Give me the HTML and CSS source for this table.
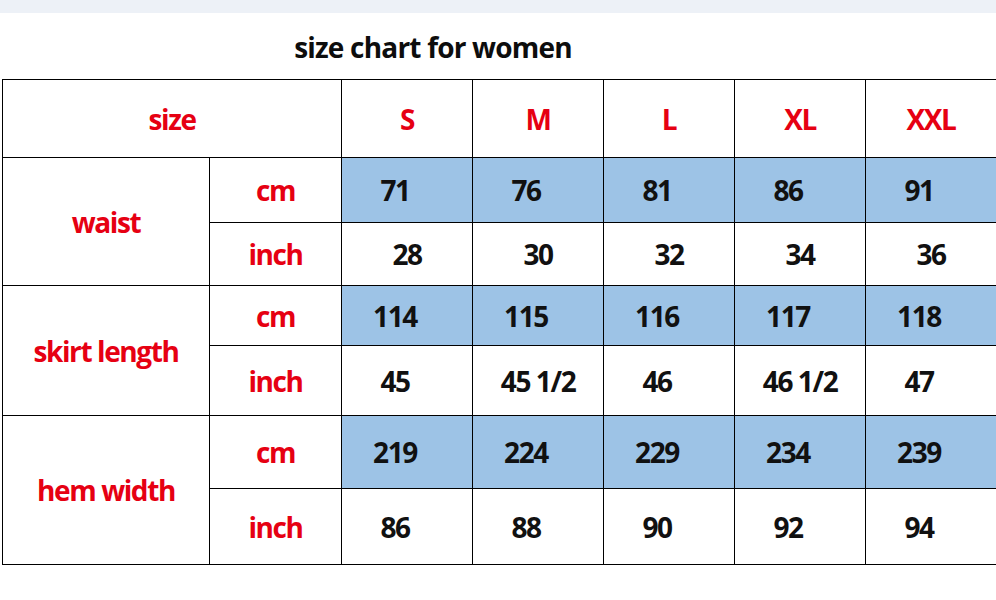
FILE: index.html
```html
<!DOCTYPE html>
<html>
<head>
<meta charset="utf-8">
<link rel="stylesheet" href="styles.css">
</head>
<body>
<div class="strip"></div>
<div class="title-wrap"><h1 class="title">size chart for women</h1></div>
<table class="chart">
  <colgroup>
    <col class="c-label"><col class="c-unit">
    <col class="c-size"><col class="c-size"><col class="c-size"><col class="c-size"><col class="c-size">
  </colgroup>
  <tr class="r-head">
    <td colspan="2" class="red">size</td>
    <td class="red">S</td><td class="red">M</td><td class="red">L</td><td class="red">XL</td><td class="red">XXL</td>
  </tr>
  <tr class="r1">
    <td rowspan="2" class="red">waist</td>
    <td class="red">cm</td>
    <td class="blue off">71</td><td class="blue off">76</td><td class="blue off">81</td><td class="blue off">86</td><td class="blue off">91</td>
  </tr>
  <tr class="r2">
    <td class="red">inch</td>
    <td>28</td><td>30</td><td>32</td><td>34</td><td>36</td>
  </tr>
  <tr class="r3">
    <td rowspan="2" class="red">skirt length</td>
    <td class="red">cm</td>
    <td class="blue off">114</td><td class="blue off">115</td><td class="blue off">116</td><td class="blue off">117</td><td class="blue off">118</td>
  </tr>
  <tr class="r4">
    <td class="red">inch</td>
    <td class="off">45</td><td>45 1/2</td><td class="off">46</td><td>46 1/2</td><td class="off">47</td>
  </tr>
  <tr class="r5">
    <td rowspan="2" class="red">hem width</td>
    <td class="red">cm</td>
    <td class="blue off">219</td><td class="blue off">224</td><td class="blue off">229</td><td class="blue off">234</td><td class="blue off">239</td>
  </tr>
  <tr class="r6">
    <td class="red">inch</td>
    <td class="off">86</td><td class="off">88</td><td class="off">90</td><td class="off">92</td><td class="off">94</td>
  </tr>
</table>
</body>
</html>
```
FILE: styles.css
```css
html, body {
  margin: 0;
  padding: 0;
  background: #ffffff;
}
body {
  width: 996px;
  font-family: "Open Sans", "Noto Sans", "DejaVu Sans", sans-serif;
  color: #111111;
}
.strip {
  height: 13px;
  background: #edf1f7;
}
.title-wrap {
  width: 866px;
  height: 66px;
  display: flex;
  align-items: center;
  justify-content: center;
}
.title {
  margin: 0;
  padding-top: 2px;
  font-size: 28px;
  font-weight: 700;
  letter-spacing: -0.8px;
  color: #0d0d0d;
}
.chart {
  margin-left: 2px;
  border-collapse: collapse;
  table-layout: fixed;
  width: 993px;
}
.c-label { width: 207px; }
.c-unit { width: 132px; }
.c-size { width: 131px; }
.chart td {
  border: 1px solid #000;
  padding: 0;
  text-align: center;
  vertical-align: middle;
  font-size: 28px;
  font-weight: 700;
  letter-spacing: -1.4px;
  line-height: 1;
}
.chart td.red { color: #e60012; }
.chart td.blue { background: #9dc3e6; }
.chart td.off { padding-right: 24px; }
.r-head { height: 78px; }
.r1 { height: 65px; }
.r2 { height: 63px; }
.r3 { height: 60px; }
.r4 { height: 70px; }
.r5 { height: 73px; }
.r6 { height: 76px; }
```
